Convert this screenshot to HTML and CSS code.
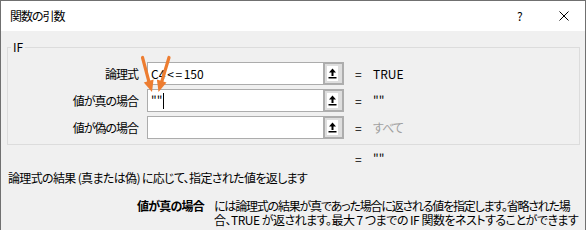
FILE: index.html
```html
<!DOCTYPE html>
<html lang="ja">
<head>
<meta charset="utf-8">
<title>関数の引数</title>
<link rel="stylesheet" href="styles.css">
</head>
<body>
<div class="window">
  <div class="titlebar">
    <span class="title">関数の引数</span>
    <span class="help">?</span>
    <svg class="close" viewBox="0 0 10 10"><path d="M0.5 0.5L9.5 9.5M9.5 0.5L0.5 9.5" stroke="#000" stroke-width="1" fill="none"/></svg>
  </div>
  <div class="content">
    <fieldset class="group">
      <legend>IF</legend>
      <div class="args">
        <div class="arg">
          <span class="label">論理式</span>
          <div class="field"><span class="input">C4<span class="op">&lt;=</span>150</span><span class="ref"><span class="ref-face"><svg viewBox="0 0 11 15"><polygon points="5.5,2.5 2,6.5 9,6.5" fill="#000"/><rect x="4.5" y="6" width="2" height="4" fill="#000"/><rect x="1.5" y="11" width="8" height="1.5" fill="#000"/></svg></span></span></div>
          <span class="eq">=</span><span class="val">TRUE</span>
        </div>
        <div class="arg">
          <span class="label">値が真の場合</span>
          <div class="field"><span class="input">""<span class="caret"></span></span><span class="ref"><span class="ref-face"><svg viewBox="0 0 11 15"><polygon points="5.5,2.5 2,6.5 9,6.5" fill="#000"/><rect x="4.5" y="6" width="2" height="4" fill="#000"/><rect x="1.5" y="11" width="8" height="1.5" fill="#000"/></svg></span></span></div>
          <span class="eq">=</span><span class="val">""</span>
        </div>
        <div class="arg">
          <span class="label">値が偽の場合</span>
          <div class="field"><span class="input"></span><span class="ref"><span class="ref-face"><svg viewBox="0 0 11 15"><polygon points="5.5,2.5 2,6.5 9,6.5" fill="#000"/><rect x="4.5" y="6" width="2" height="4" fill="#000"/><rect x="1.5" y="11" width="8" height="1.5" fill="#000"/></svg></span></span></div>
          <span class="eq">=</span><span class="val muted">すべて</span>
        </div>
      </div>
    </fieldset>
    <div class="result"><span class="spacer"></span><span class="eq">=</span><span class="val">""</span></div>
    <p class="desc">論理式の結果 (真または偽) に応じて、指定された値を返します</p>
    <div class="help-row">
      <span class="argname">値が真の場合</span>
      <p class="help-text"><span class="line1">には論理式の結果が真であった場合に返される値を指定します。省略された場</span><br><span class="line2">合、TRUE が返されます。最大 7 つまでの IF 関数をネストすることができます</span></p>
    </div>
  </div>
</div>
<svg class="arrows" viewBox="0 0 587 230">
  <g stroke="#ed7d31" stroke-width="3.2" stroke-linecap="round">
    <line x1="142.5" y1="57.5" x2="148.9" y2="81.5"/>
    <line x1="169" y1="57.5" x2="161.8" y2="81.5"/>
  </g>
  <g fill="#ed7d31">
    <polygon points="152,92 153.6,79.6 143.8,82.6"/>
    <polygon points="158.5,92 166.5,82.6 156.9,79.6"/>
  </g>
</svg>
</body>
</html>
```
FILE: styles.css
```css
* { box-sizing: border-box; }
html, body { margin: 0; }
body {
  background: #fff;
  color: #000;
  font: 12px/14px "Noto Sans CJK JP", "Noto Sans", sans-serif;
  font-feature-settings: "palt" 1;
}
.window {
  width: 586px;
  height: 230px;
  border: 1px solid #707070;
  border-bottom: none;
  background: #f0f0f0;
  overflow: hidden;
}
.titlebar {
  height: 30px;
  background: #fff;
  display: flex;
  align-items: center;
  padding-left: 9px;
}
.title { flex: 1; letter-spacing: -1px; }
.help { width: 7px; margin-right: 35px; }
.close { width: 10px; height: 10px; margin-right: 16px; display: block; }
.content { padding: 9px 5px 0 6px; }
.group {
  margin: 0;
  border: 1px solid #dcdcdc;
  padding: 8px 0 5px;
  min-width: 0;
}
.group legend {
  margin-left: 3px;
  padding: 0 2px;
  line-height: 14px;
}
.args { display: flex; flex-direction: column; gap: 4px; }
.arg { display: flex; align-items: center; height: 23px; }
.label { width: 130px; text-align: right; letter-spacing: -1px; }
.field { margin-left: 9px; width: 197px; height: 23px; display: flex; flex: none; }
.input {
  flex: 1;
  background: #fff;
  border: 1px solid #acacac;
  border-right: none;
  padding-left: 3px;
  line-height: 21px;
  display: flex;
  align-items: center;
}
.op { letter-spacing: 1.5px; margin-left: 2px; }
.caret { display: inline-block; width: 1px; height: 16px; background: #000; margin-left: 1px; }
.ref {
  width: 21px;
  border: 2px solid #adadad;
  background: #dedede;
  display: flex;
  align-items: center;
  padding-left: 2px;
}
.ref-face { width: 11px; height: 15px; background: #fff; display: block; }
.ref-face svg { display: block; width: 11px; height: 15px; }
.eq { margin-left: 11px; width: 18px; flex: none; }
.val.muted { color: #a0a0a0; letter-spacing: -1px; }
.result { display: flex; align-items: center; height: 23px; margin-top: 2px; padding-left: 1px; }
.spacer { width: 336px; flex: none; }
.desc { margin: 1px 0 0 1px; line-height: 14px; letter-spacing: -0.65px; }
.help-row { display: flex; margin-top: 14px; padding-left: 130px; }
.argname { width: 77px; font-weight: bold; flex: none; white-space: nowrap; letter-spacing: -0.8px; }
.help-text { margin: 0; white-space: nowrap; line-height: 14px; }
.line1 { letter-spacing: -1.2px; }
.line2 { letter-spacing: -0.5px; }
.arrows { position: absolute; left: 0; top: 0; width: 587px; height: 230px; pointer-events: none; }
```
